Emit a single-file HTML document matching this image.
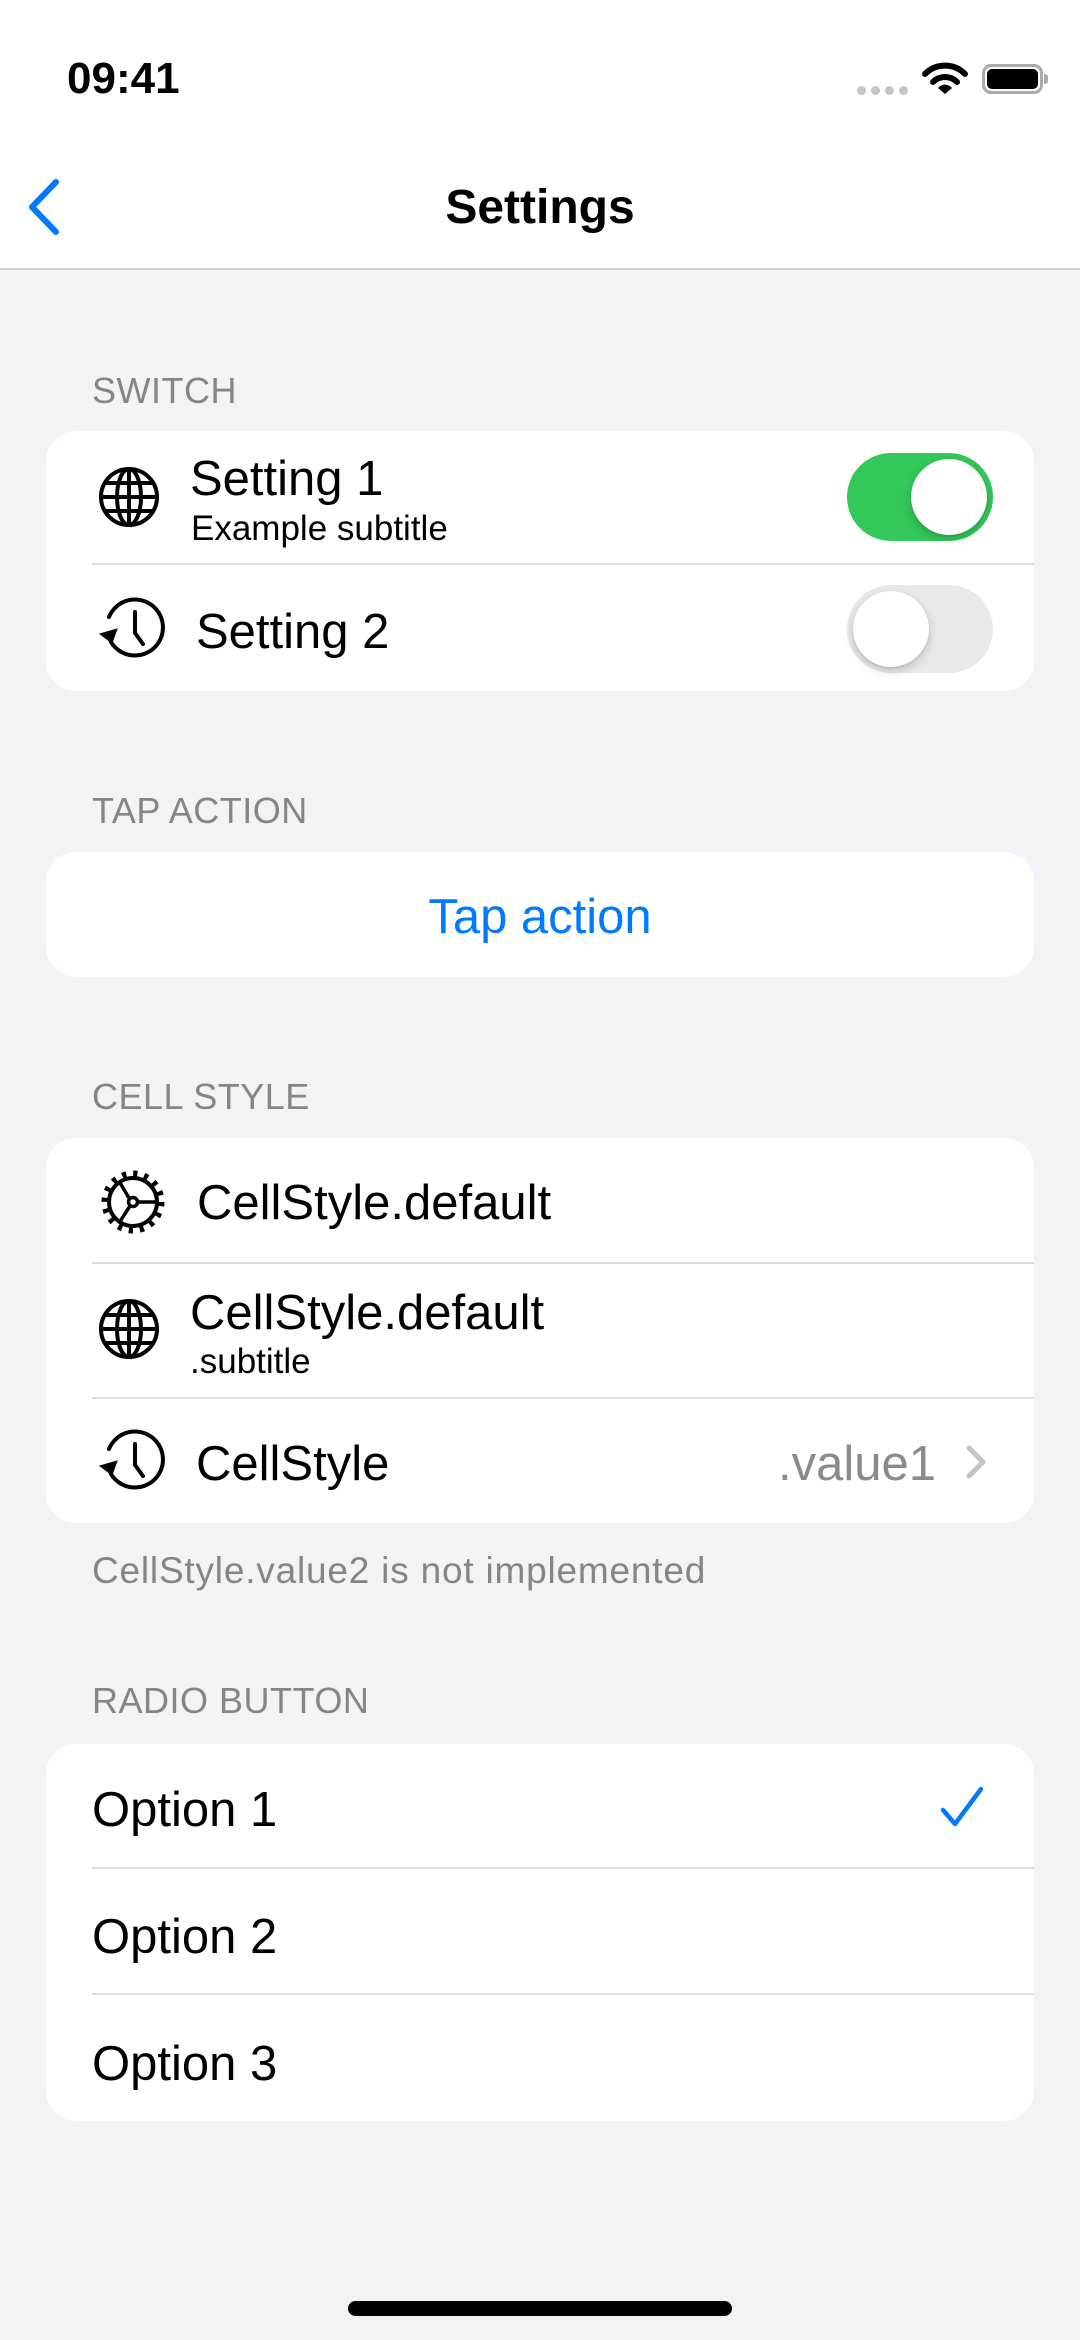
<!DOCTYPE html>
<html><head><meta charset="utf-8"><style>
*{margin:0;padding:0;box-sizing:border-box}
body{width:1080px;height:2340px;background:#f2f2f7;position:relative;overflow:hidden;font-family:"Liberation Sans",sans-serif;color:#000}
.a{position:absolute;white-space:nowrap}
.t{font-size:49px;line-height:60px;height:60px}
.s{font-size:35px;line-height:40px;height:40px}
.h{font-size:36px;line-height:44px;height:44px;color:#858589;letter-spacing:0.5px}
.card{position:absolute;left:46px;width:988px;background:#fff;border-radius:30px}
.div{position:absolute;left:92px;right:46px;height:2px;background:#dcdce0}
.sw{position:absolute;left:847px;width:146px;height:88px;border-radius:44px}
.knob{position:absolute;top:6px;width:76px;height:76px;border-radius:38px;background:#fff;box-shadow:0 4px 10px rgba(0,0,0,.18),0 1px 2px rgba(0,0,0,.1)}
</style></head><body>
<div style="position:absolute;left:0;top:0;width:1080px;height:270px;background:#fff;border-bottom:2px solid #d0d0d4"></div>
<div class="a" style="left:67px;top:53px;font-size:44px;font-weight:bold;line-height:52px">09:41</div>
<div class="a" style="left:857px;top:86px;width:9px;height:9px;border-radius:5px;background:#c4c4c4"></div>
<div class="a" style="left:871px;top:86px;width:9px;height:9px;border-radius:5px;background:#c4c4c4"></div>
<div class="a" style="left:885px;top:86px;width:9px;height:9px;border-radius:5px;background:#c4c4c4"></div>
<div class="a" style="left:899px;top:86px;width:9px;height:9px;border-radius:5px;background:#c4c4c4"></div>
<svg class="a" style="left:922px;top:62px" width="46" height="32" viewBox="0 0 46 32"><path d="M3 12 A28 28 0 0 1 43 12" stroke="#000" stroke-width="6" fill="none" stroke-linecap="round"/><path d="M11 20 A17 17 0 0 1 35 20" stroke="#000" stroke-width="6" fill="none" stroke-linecap="round"/><path d="M16 26 L23 32 L30 26 A9 9 0 0 0 16 26Z" fill="#000"/></svg>
<div class="a" style="left:982px;top:64px;width:61px;height:30px;border:3px solid #aaa;border-radius:9px"></div>
<div class="a" style="left:987px;top:69px;width:51px;height:20px;background:#000;border-radius:5px"></div>
<div class="a" style="left:1044px;top:74px;width:4px;height:10px;background:#aaa;border-radius:0 3px 3px 0"></div>
<svg class="a" style="left:24px;top:178px" width="40" height="58" viewBox="0 0 40 58"><path d="M32 4 L8 29 L32 54" stroke="#007aff" stroke-width="6" fill="none" stroke-linecap="round" stroke-linejoin="round"/></svg>
<div class="a" style="left:0;width:1080px;text-align:center;top:178px;font-size:48px;font-weight:bold;line-height:60px">Settings</div>

<div class="a h" style="left:92px;top:369px">SWITCH</div>
<div class="card" style="top:431px;height:260px"></div>
<div class="div" style="top:563px"></div>
<svg class="a" style="left:98px;top:466px" width="62" height="62" viewBox="0 0 62 62" fill="none" stroke="#000" stroke-width="4"><circle cx="31" cy="31" r="28"/><ellipse cx="31" cy="31" rx="12" ry="28"/><line x1="31" y1="3" x2="31" y2="59"/><line x1="3" y1="31" x2="59" y2="31"/><path d="M8 17 H54 M8 45 H54"/></svg>
<div class="a t" style="left:190px;top:449px">Setting 1</div>
<div class="a s" style="left:191px;top:509px">Example subtitle</div>
<div class="sw" style="top:453px;background:#34c759"><div class="knob" style="left:64px"></div></div>
<svg class="a" style="left:97px;top:595px" width="70" height="70" viewBox="0 0 70 70" fill="none" stroke="#000" stroke-width="4" stroke-linecap="round"><path d="M14 47 A28 28 0 1 0 12 22"/><path d="M38 17 V38 L46 49"/><path d="M3 39 L15 48 L20 34Z" fill="#000" stroke-width="1"/></svg>
<div class="a t" style="left:196px;top:602px">Setting 2</div>
<div class="sw" style="top:585px;background:#e9e9eb"><div class="knob" style="left:6px"></div></div>

<div class="a h" style="left:92px;top:789px">TAP ACTION</div>
<div class="card" style="top:852px;height:125px"></div>
<div class="a t" style="left:0;width:1080px;text-align:center;top:887px;color:#007aff">Tap action</div>

<div class="a h" style="left:92px;top:1075px">CELL STYLE</div>
<div class="card" style="top:1138px;height:385px"></div>
<div class="div" style="top:1262px"></div>
<div class="div" style="top:1397px"></div>
<svg class="a" style="left:97px;top:1166px" width="72" height="72" viewBox="0 0 72 72" fill="none" stroke="#000" stroke-width="3.5"><circle cx="36" cy="36" r="27" stroke-dasharray="4 6.6" stroke-width="9"/><circle cx="36" cy="36" r="24" fill="#fff" stroke="none"/><circle cx="36" cy="36" r="24" stroke-width="4"/><circle cx="36" cy="36" r="4.5"/><path d="M32 32 L22 15 M40.5 36 H60 M33 40 L22 57"/></svg>
<div class="a t" style="left:197px;top:1173px">CellStyle.default</div>
<svg class="a" style="left:98px;top:1298px" width="62" height="62" viewBox="0 0 62 62" fill="none" stroke="#000" stroke-width="4"><circle cx="31" cy="31" r="28"/><ellipse cx="31" cy="31" rx="12" ry="28"/><line x1="31" y1="3" x2="31" y2="59"/><line x1="3" y1="31" x2="59" y2="31"/><path d="M8 17 H54 M8 45 H54"/></svg>
<div class="a t" style="left:190px;top:1283px">CellStyle.default</div>
<div class="a s" style="left:190px;top:1342px">.subtitle</div>
<svg class="a" style="left:97px;top:1427px" width="70" height="70" viewBox="0 0 70 70" fill="none" stroke="#000" stroke-width="4" stroke-linecap="round"><path d="M14 47 A28 28 0 1 0 12 22"/><path d="M38 17 V38 L46 49"/><path d="M3 39 L15 48 L20 34Z" fill="#000" stroke-width="1"/></svg>
<div class="a t" style="left:196px;top:1434px">CellStyle</div>
<div class="a t" style="right:144px;top:1434px;color:#8a8a8e">.value1</div>
<svg class="a" style="left:964px;top:1444px" width="24" height="36" viewBox="0 0 24 36"><path d="M5 4 L19 18 L5 32" stroke="#c4c4c7" stroke-width="5" fill="none" stroke-linecap="round" stroke-linejoin="round"/></svg>
<div class="a h" style="left:92px;top:1549px;color:#858589;font-size:37px;letter-spacing:0.8px">CellStyle.value2 is not implemented</div>

<div class="a h" style="left:92px;top:1679px">RADIO BUTTON</div>
<div class="card" style="top:1744px;height:377px"></div>
<div class="div" style="top:1867px"></div>
<div class="div" style="top:1993px"></div>
<div class="a t" style="left:92px;top:1780px">Option 1</div>
<svg class="a" style="left:938px;top:1784px" width="48" height="46" viewBox="0 0 48 46"><path d="M5 26 L17 40 L43 5" stroke="#007aff" stroke-width="4.5" fill="none" stroke-linecap="round" stroke-linejoin="round"/></svg>
<div class="a t" style="left:92px;top:1907px">Option 2</div>
<div class="a t" style="left:92px;top:2034px">Option 3</div>

<div class="a" style="left:348px;top:2301px;width:384px;height:15px;border-radius:8px;background:#000"></div>
</body></html>
